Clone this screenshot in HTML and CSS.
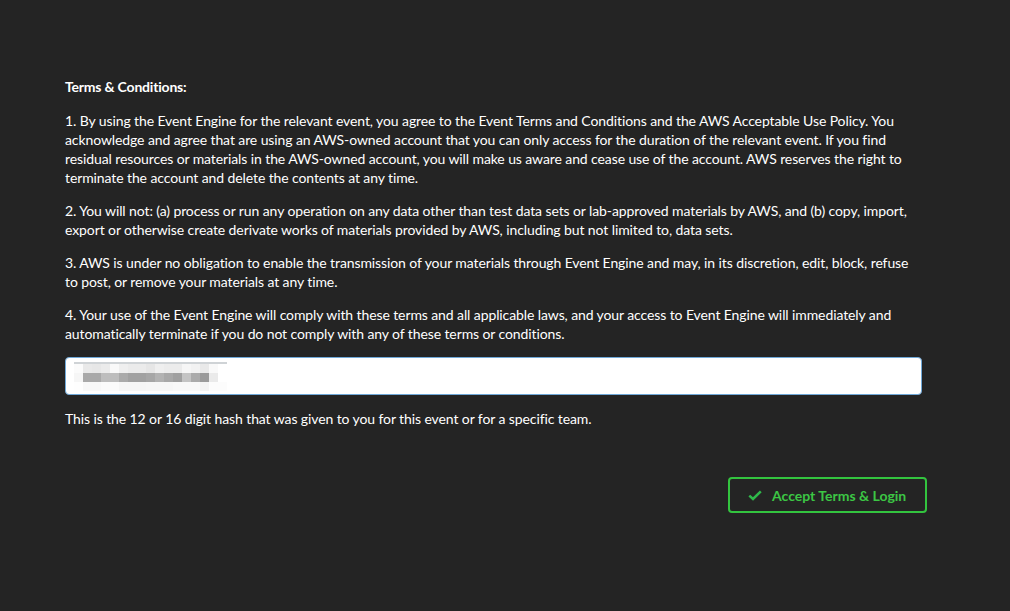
FILE: index.html
```html
<!DOCTYPE html>
<html>
<head>
<meta charset="utf-8">
<link rel="stylesheet" href="styles.css">
</head>
<body>
<main class="page">
  <section class="terms">
    <h2 class="title">Terms &amp; Conditions:</h2>
    <p>1. By using the Event Engine for the relevant event, you agree to the Event Terms and Conditions and the AWS Acceptable Use Policy. You acknowledge and agree that are using an AWS-owned account that you can only access for the duration of the relevant event. If you find residual resources or materials in the AWS-owned account, you will make us aware and cease use of the account. AWS reserves the right to terminate the account and delete the contents at any time.</p>
    <p>2. You will not: (a) process or run any operation on any data other than test data sets or lab-approved materials by AWS, and (b) copy, import, export or otherwise create derivate works of materials provided by AWS, including but not limited to, data sets.</p>
    <p>3. AWS is under no obligation to enable the transmission of your materials through Event Engine and may, in its discretion, edit, block, refuse to post, or remove your materials at any time.</p>
    <p>4. Your use of the Event Engine will comply with these terms and all applicable laws, and your access to Event Engine will immediately and automatically terminate if you do not comply with any of these terms or conditions.</p>
  </section>
  <div class="field">
    <div class="blur">
      <div class="blur-line"></div>
      <div class="blur-row r1"></div>
      <div class="blur-row r2"></div>
      <div class="blur-row r3"></div>
    </div>
  </div>
  <p class="hint">This is the 12 or 16 digit hash that was given to you for this event or for a specific team.</p>
  <div class="actions">
    <button class="accept">
      <svg class="check" width="14" height="11" viewBox="0 0 14 11"><path d="M1.3 5.6 L5 9 L12.8 1.4" fill="none" stroke="#2fb84a" stroke-width="2.5"/></svg>
      <span>Accept Terms &amp; Login</span>
    </button>
  </div>
</main>
</body>
</html>
```
FILE: styles.css
```css
html, body {
  margin: 0;
  padding: 0;
  background: #242424;
}
body {
  font-family: Lato, "Open Sans", "Liberation Sans", sans-serif;
  font-size: 14px;
  line-height: 19px;
  color: #ffffff;
}
.page {
  width: 862px;
  padding: 77px 0 0 65px;
}
.terms {
  width: 857px;
  letter-spacing: -0.1px;
}
.title {
  font-size: 14px;
  font-weight: 700;
  line-height: 19px;
  margin: 0 0 15px 0;
  letter-spacing: -0.2px;
}
.terms p {
  margin: 0 0 14px 0;
}
.field {
  width: 855px;
  height: 36px;
  margin-top: 14px;
  background: #ffffff;
  border: 1px solid #6fa8d8;
  border-radius: 4px;
  position: relative;
}
.blur {
  padding: 4px 0 0 8px;
  width: 153px;
}
.blur-line {
  height: 2px;
  width: 153px;
  background: #cfd3d6;
}
.blur-row {
  height: 9px;
  width: 153px;
}
.r1 {
  background: linear-gradient(90deg,
    #fbfbfb 0 9px, #e9e9e9 9px 18px, #e7e7e7 18px 27px, #ebebeb 27px 36px,
    #f9f9f9 36px 45px, #efefef 45px 54px, #ebebeb 54px 72px, #e6e6e6 72px 81px,
    #efefef 81px 90px, #ececec 90px 108px, #f6f6f6 108px 117px, #f2f2f2 117px 126px,
    #e9e9e9 126px 135px, #f9f9f9 135px 144px, #ffffff 144px 153px);
}
.r2 {
  background: linear-gradient(90deg,
    #f6f6f6 0 9px, #a9a9a9 9px 27px, #bdbdbd 27px 45px, #aaaaaa 45px 54px,
    #a1a1a1 54px 72px, #a6a6a6 72px 81px, #b2b2b2 81px 90px, #a8a8a8 90px 99px,
    #a0a0a0 99px 108px, #c4c4c4 108px 117px, #ababab 117px 126px, #9a9a9a 126px 135px,
    #eaeaea 135px 144px, #ffffff 144px 153px);
}
.r3 {
  background: linear-gradient(90deg,
    #fefefe 0 9px, #f8f8f8 9px 27px, #fbfbfb 27px 45px, #f6f6f6 45px 72px,
    #f7f7f7 72px 99px, #f9f9f9 99px 126px, #f3f3f3 126px 135px, #fcfcfc 135px 153px);
}
.hint {
  margin: 14px 0 0 0;
  letter-spacing: -0.1px;
}
.actions {
  display: flex;
  justify-content: flex-end;
  margin-top: 49px;
}
.accept {
  display: flex;
  align-items: center;
  gap: 10px;
  width: 199px;
  height: 36px;
  padding: 0 0 0 18px;
  background: transparent;
  border: 2px solid #33c43f;
  border-radius: 4px;
  color: #3cc644;
  font-family: Lato, "Open Sans", "Liberation Sans", sans-serif;
  font-size: 14px;
  font-weight: 700;
  cursor: pointer;
}
.check {
  display: block;
}
```
